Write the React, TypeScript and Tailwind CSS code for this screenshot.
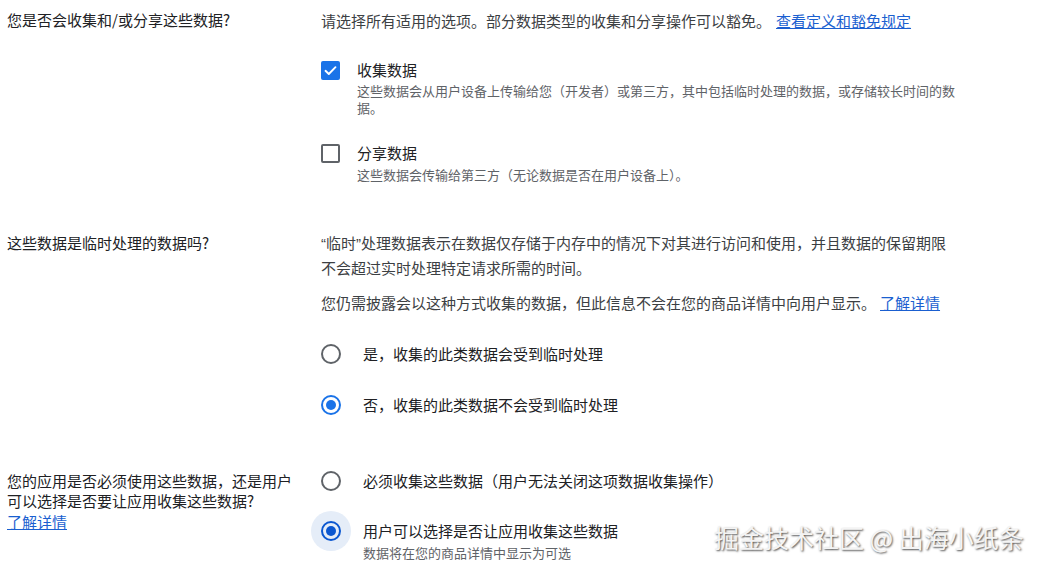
import React from 'react';

const font = "font-['Noto_Sans_CJK_SC','Noto_Sans',sans-serif]";

function Checkbox({ checked }: { checked: boolean }) {
  return (
    <div className="w-[36px] shrink-0 pt-[1px]">
      {checked ? (
        <div className="w-[19px] h-[19px] rounded-[2px] bg-[#1a73e8] flex items-center justify-center">
          <svg width="15" height="15" viewBox="0 0 15 15" fill="none">
            <path d="M2.5 7.8 L5.8 11 L12.5 4.2" stroke="white" strokeWidth="1.9" strokeLinecap="round" strokeLinejoin="round" />
          </svg>
        </div>
      ) : (
        <div className="w-[19px] h-[19px] rounded-[2px] border-2 border-[#5f6368]" />
      )}
    </div>
  );
}

function Radio({ checked, focused, color = '#1a73e8' }: { checked: boolean; focused?: boolean; color?: string }) {
  return (
    <div className={`w-[40px] h-[40px] shrink-0 rounded-full flex items-center justify-center ${focused ? 'bg-[#e5edf8]' : ''}`}>
      {checked ? (
        <div className="w-[20px] h-[20px] rounded-full border-2 flex items-center justify-center" style={{ borderColor: color }}>
          <div className="w-[10px] h-[10px] rounded-full" style={{ background: color }} />
        </div>
      ) : (
        <div className="w-[20px] h-[20px] rounded-full border-2 border-[#5f6368]" />
      )}
    </div>
  );
}

export default function App() {
  return (
    <div className={`relative w-[1042px] h-[569px] overflow-hidden bg-white pl-[7px] ${font}`}>
      {/* Row 1 */}
      <div className="flex pt-[8px]">
        <div className="w-[314px] shrink-0 text-[15px] leading-[24px] text-[#202124]">您是否会收集和/或分享这些数据?</div>
        <div className="w-[642px] mt-[1px]">
          <p className="text-[15px] leading-[24px] text-[#3c4043]">
            请选择所有适用的选项。部分数据类型的收集和分享操作可以豁免。
            <a className="text-[#1a5fd0] underline ml-[5px]">查看定义和豁免规定</a>
          </p>

          <div className="flex mt-[27px]">
            <Checkbox checked />
            <div>
              <div className="text-[15px] leading-[20px] text-[#202124]">收集数据</div>
              <div className="mt-[2px] text-[13px] leading-[17px] text-[#5f6368]">
                这些数据会从用户设备上传输给您（开发者）或第三方，其中包括临时处理的数据，或存储较长时间的数据。
              </div>
            </div>
          </div>

          <div className="flex mt-[27px]">
            <Checkbox checked={false} />
            <div>
              <div className="text-[15px] leading-[20px] text-[#202124]">分享数据</div>
              <div className="mt-[3px] text-[13px] leading-[17px] text-[#5f6368]">
                这些数据会传输给第三方（无论数据是否在用户设备上）。
              </div>
            </div>
          </div>
        </div>
      </div>

      {/* Row 2 */}
      <div className="flex mt-[48px]">
        <div className="w-[314px] shrink-0 text-[15px] leading-[24px] text-[#202124]">这些数据是临时处理的数据吗?</div>
        <div className="w-[642px]">
          <p className="w-[634px] font-['Liberation_Sans','Noto_Sans_CJK_SC',sans-serif] text-[15px] leading-[25px] text-[#3c4043]">
            “临时”处理数据表示在数据仅存储于内存中的情况下对其进行访问和使用，并且数据的保留期限不会超过实时处理特定请求所需的时间。
          </p>
          <p className="mt-[9px] text-[15px] leading-[25px] text-[#3c4043]">
            您仍需披露会以这种方式收集的数据，但此信息不会在您的商品详情中向用户显示。
            <a className="text-[#1a5fd0] underline ml-[4px]">了解详情</a>
          </p>

          <div className="flex items-center mt-[19px] -ml-[10px]">
            <Radio checked={false} />
            <span className="ml-[12px] text-[15px] leading-[20px] text-[#202124]">是，收集的此类数据会受到临时处理</span>
          </div>
          <div className="flex items-center mt-[11px] -ml-[10px]">
            <Radio checked />
            <span className="ml-[12px] text-[15px] leading-[20px] text-[#202124]">否，收集的此类数据不会受到临时处理</span>
          </div>
        </div>
      </div>

      {/* Row 3 */}
      <div className="flex mt-[36px]">
        <div className="w-[314px] shrink-0 pt-[10px]">
          <div className="w-[290px] text-[15px] leading-[20px] text-[#202124]">
            您的应用是否必须使用这些数据，还是用户可以选择是否要让应用收集这些数据?
          </div>
          <a className="block text-[15px] leading-[22px] text-[#1a5fd0] underline">了解详情</a>
        </div>
        <div className="w-[642px]">
          <div className="flex items-center -ml-[10px]">
            <Radio checked={false} />
            <span className="ml-[12px] text-[15px] leading-[20px] text-[#202124]">必须收集这些数据（用户无法关闭这项数据收集操作）</span>
          </div>
          <div className="flex items-start mt-[10px] -ml-[10px]">
            <Radio checked focused color="#0b57d0" />
            <div className="ml-[12px] pt-[10px]">
              <div className="text-[15px] leading-[20px] text-[#202124]">用户可以选择是否让应用收集这些数据</div>
              <div className="mt-[3px] text-[13px] leading-[17px] text-[#5f6368]">数据将在您的商品详情中显示为可选</div>
            </div>
          </div>
        </div>
      </div>

      {/* Watermark */}
      <div className="absolute left-[714px] top-[521px] text-[25px] leading-[32px] text-[#f4f4f4] whitespace-nowrap [text-shadow:1px_1px_2px_rgba(0,0,0,0.7)]">
        掘金技术社区 @ 出海小纸条
      </div>
    </div>
  );
}
